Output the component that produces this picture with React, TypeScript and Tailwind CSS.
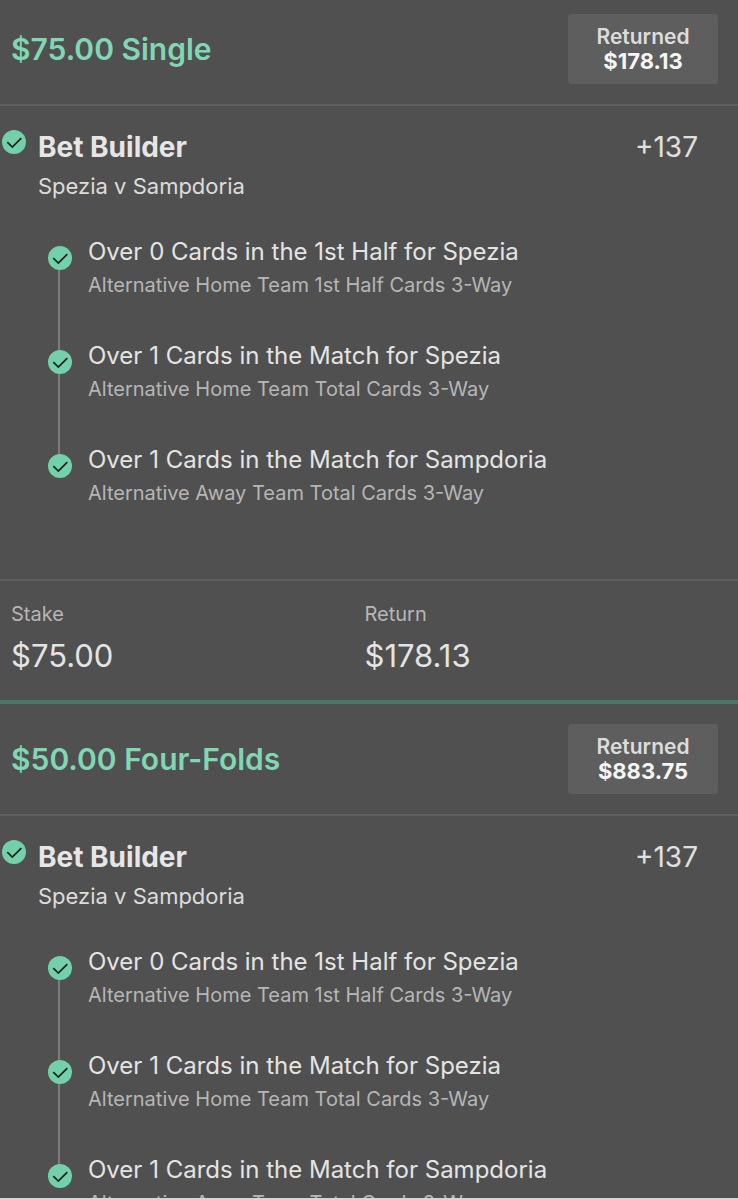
type Leg = { pick: string; market: string };
type Bet = { title: string; stake: string; returned: string };

const legs: Leg[] = [
  { pick: "Over 0 Cards in the 1st Half for Spezia", market: "Alternative Home Team 1st Half Cards 3-Way" },
  { pick: "Over 1 Cards in the Match for Spezia", market: "Alternative Home Team Total Cards 3-Way" },
  { pick: "Over 1 Cards in the Match for Sampdoria", market: "Alternative Away Team Total Cards 3-Way" },
];

const bets: Bet[] = [
  { title: "$75.00 Single", stake: "$75.00", returned: "$178.13" },
  { title: "$50.00 Four-Folds", stake: "$50.00", returned: "$883.75" },
];

function WonIcon() {
  return (
    <svg viewBox="0 0 24 24" className="size-6 shrink-0" role="img" aria-label="Won">
      <circle cx="12" cy="12" r="12" fill="#74d0aa" />
      <path d="M5.3 12.2 10.3 17 19.3 8.2" fill="none" stroke="#10231b" strokeWidth="1.7" />
    </svg>
  );
}

function LegRow({ leg, last }: { leg: Leg; last: boolean }) {
  return (
    <li className="flex gap-4">
      <div className="flex w-6 shrink-0 flex-col pt-2.5">
        <WonIcon />
        {!last && <div className="-mb-2.5 ml-2.5 w-0.5 grow bg-[#7c7c7c]" />}
      </div>
      <div className="pb-[38px]">
        <p className="text-2xl leading-8 text-[#e4e4e4]">{leg.pick}</p>
        <p className="text-xl leading-[34px] text-[#b6b6b6]">{leg.market}</p>
      </div>
    </li>
  );
}

function BetCard({ bet }: { bet: Bet }) {
  return (
    <article className="border-b-4 border-[#4a7a67]">
      <header className="flex items-center justify-between border-b-2 border-[#5e5e5e] py-5 pr-5 pl-[11px]">
        <h2 className="text-[30px] leading-9 font-semibold text-[#80d7b4]">{bet.title}</h2>
        <div className="flex h-[70px] w-[150px] flex-col items-center justify-center rounded bg-[#5e5e5e] text-center leading-[25px]">
          <span className="text-[21px] font-semibold text-[#dcdcdc]">Returned</span>
          <span className="text-[22px] font-bold text-[#f5f5f5]">{bet.returned}</span>
        </div>
      </header>

      <div className="flex gap-3 border-b-2 border-[#5e5e5e] pt-6 pb-[31px] pl-0.5">
        <WonIcon />
        <div className="grow">
          <div className="flex items-center justify-between pr-10">
            <h3 className="text-[28px] leading-[34px] font-bold text-[#e6e6e6]">Bet Builder</h3>
            <span className="text-[28px] leading-[34px] text-[#e0e0e0]">+137</span>
          </div>
          <p className="mt-1.5 text-[22px] leading-8 text-[#dcdcdc]">Spezia v Sampdoria</p>
          <ul className="mt-[34px] pl-2.5">
            {legs.map((leg, i) => (
              <LegRow key={leg.pick} leg={leg} last={i === legs.length - 1} />
            ))}
          </ul>
        </div>
      </div>

      <dl className="grid grid-cols-2 pt-[17px] pr-5 pb-[22px] pl-[11px]">
        <div>
          <dt className="text-xl leading-8 text-[#b6b6b6]">Stake</dt>
          <dd className="mt-1 text-[31px] leading-[44px] text-[#e4e4e4]">{bet.stake}</dd>
        </div>
        <div>
          <dt className="text-xl leading-8 text-[#b6b6b6]">Return</dt>
          <dd className="mt-1 text-[31px] leading-[44px] text-[#e4e4e4]">{bet.returned}</dd>
        </div>
      </dl>
    </article>
  );
}

export default function App() {
  return (
    <main className="h-screen overflow-hidden border-b-2 border-[#d6d6d6] bg-[#505050] font-['Inter','Liberation_Sans',sans-serif]">
      <div className="-mt-1.5">
        {bets.map((bet) => (
          <BetCard key={bet.title} bet={bet} />
        ))}
      </div>
    </main>
  );
}
